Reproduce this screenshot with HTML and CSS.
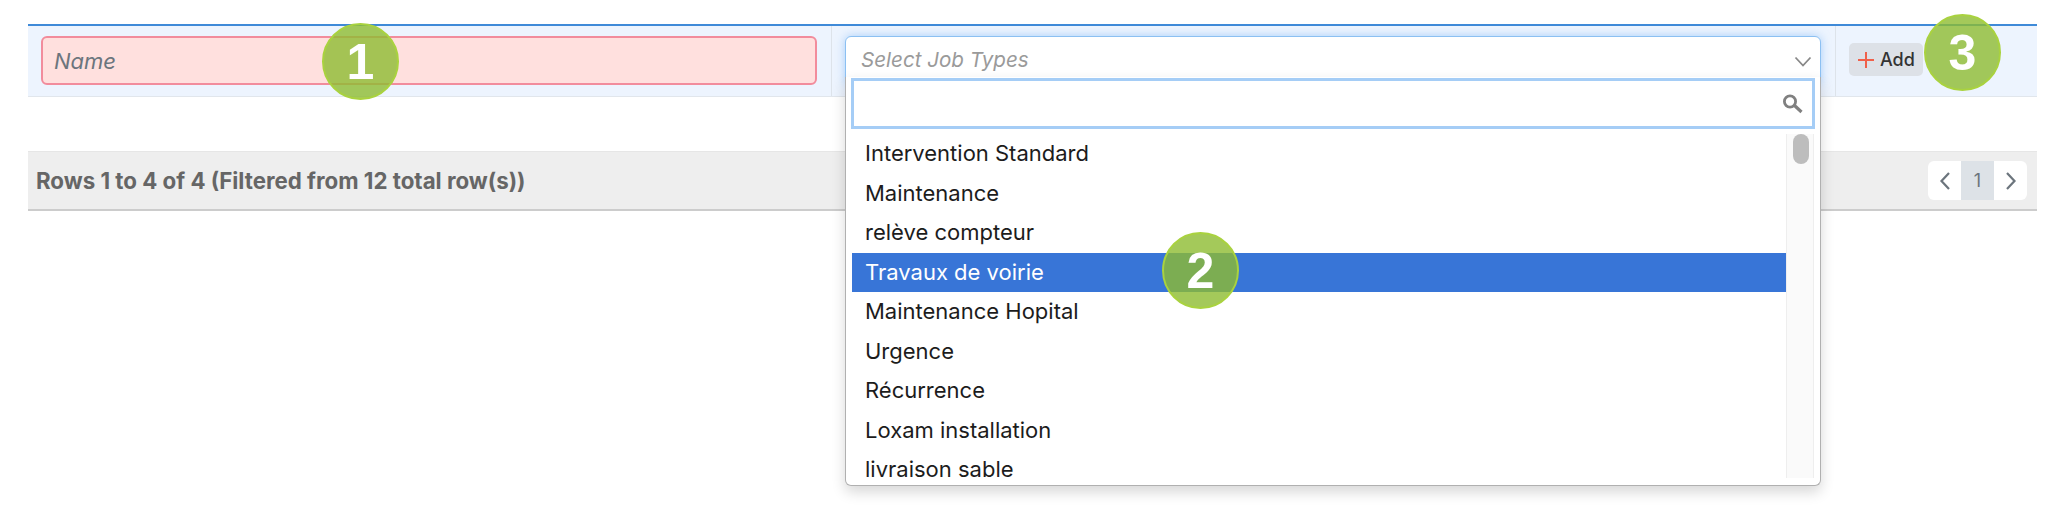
FILE: index.html
```html
<!DOCTYPE html>
<html lang="en">
<head>
    <meta charset="UTF-8">
    <meta name="viewport" content="width=device-width, initial-scale=1.0">
    <title>Job Types</title>
    <link rel="stylesheet" href="styles.css">
</head>
<body>

<div class="add-row">
    <div class="cell cell-name">
        <input class="name-input" type="text" placeholder="Name">
        <span class="badge badge-one">1</span>
    </div>
    <div class="cell cell-select">
        <div class="select">
            <span class="select-placeholder">Select Job Types</span>
            <svg class="select-arrow" width="18" height="12" viewBox="0 0 18 12"><path d="M1.500 1.500 9 9.500l7.500-8" fill="none" stroke="#888" stroke-width="1.800"/></svg>
            <div class="dropdown">
                <div class="search-box">
                    <svg width="22" height="20" viewBox="0 0 22 20"><circle cx="8" cy="7.500" r="5.600" fill="none" stroke="#808080" stroke-width="2.800"/><path d="M12.500 11.500l7 6.500" fill="none" stroke="#808080" stroke-width="3.200"/></svg>
                </div>
                <div class="results">
                    <ul class="options">
                        <li>Intervention Standard</li>
                        <li>Maintenance</li>
                        <li>relève compteur</li>
                        <li class="selected">Travaux de voirie</li>
                        <li>Maintenance Hopital</li>
                        <li>Urgence</li>
                        <li>Récurrence</li>
                        <li>Loxam installation</li>
                        <li>livraison sable</li>
                    </ul>
                    <div class="scroll-track"><div class="scroll-thumb"></div></div>
                </div>
            </div>
        </div>
        <span class="badge badge-two">2</span>
    </div>
    <div class="cell cell-action">
        <button class="add-btn" type="button">
            <svg width="16" height="16" viewBox="0 0 16 16"><path d="M8 0v16M0 8h16" stroke="#f0604a" stroke-width="2"/></svg>
            Add
        </button>
        <span class="badge badge-three">3</span>
    </div>
</div>

<div class="table-footer">
    <span class="rows-info">Rows 1 to 4 of 4 (Filtered from 12 total row(s))</span>
    <div class="pagination">
        <span class="page-arrow"><svg width="12" height="20" viewBox="0 0 12 20"><path d="M10 2 2.500 10l7.500 8" fill="none" stroke="#6c757d" stroke-width="2.200"/></svg></span>
        <span class="page-current">1</span>
        <span class="page-arrow"><svg width="12" height="20" viewBox="0 0 12 20"><path d="M2 2l7.500 8L2 18" fill="none" stroke="#6c757d" stroke-width="2.200"/></svg></span>
    </div>
</div>

</body>
</html>
```

FILE: styles.css
```css
* {
    margin: 0;
    padding: 0;
    box-sizing: border-box;
}

body {
    font-family: Inter, "Liberation Sans", sans-serif;
    background-color: #fff;
    color: #222;
    min-height: 528px;
    padding: 24px 31px 0 28px;
}

.add-row {
    display: flex;
    height: 73px;
    background-color: #edf4fe;
    border-top: 2px solid #3f8ad8;
    border-bottom: 1px solid #e1e6ec;
}

.cell {
    position: relative;
    padding: 10px 14px 10px 13px;
    border-right: 1px solid #dde3ea;
}

.cell-name {
    width: 804px;
}

.cell-select {
    width: 1004px;
}

.cell-action {
    flex: 1;
    border-right: none;
    padding: 17px 13px;
}

.name-input {
    display: block;
    width: 100%;
    height: 49px;
    padding: 0 11px;
    font-family: inherit;
    font-size: 22px;
    background-color: #ffe0de;
    border: 2px solid #f28c9c;
    border-radius: 6px;
    outline: none;
}

.name-input::placeholder {
    font-style: italic;
    color: #6c757d;
    opacity: 1;
}

.select {
    position: relative;
    height: 49px;
    padding: 0 15px;
    display: flex;
    align-items: flex-start;
    justify-content: space-between;
    background-color: #fff;
    border: 1px solid #8cc0f2;
    border-radius: 6px;
    box-shadow: 0 0 10px rgba(110, 175, 245, 0.55);
    font-size: 20.6px;
}

.select-placeholder {
    font-style: italic;
    color: #9a9a9a;
    line-height: 46px;
}

.select-arrow {
    margin: 19px -7px 0 0;
}

.dropdown {
    position: absolute;
    z-index: 2;
    top: 40px;
    left: -1px;
    right: -1px;
    height: 409px;
    padding-top: 1px;
    background-color: #fff;
    border: 1px solid #b0b0b0;
    border-top: none;
    border-radius: 0 0 6px 6px;
    box-shadow: 0 6px 14px rgba(0, 0, 0, 0.16);
}

.search-box {
    display: flex;
    align-items: center;
    justify-content: flex-end;
    height: 51px;
    margin: 0 5px;
    padding-right: 8px;
    background-color: #fff;
    border: 3px solid #a5cdf6;
}

.results {
    display: flex;
    height: 350px;
    margin: 5px 6px 0;
}

.options {
    flex: 1;
    overflow: hidden;
    list-style: none;
}

.options li {
    height: 39.5px;
    padding: 6px 0 0 13px;
    font-size: 22px;
    line-height: 26px;
    color: #1c1c1c;
}

.options li.selected {
    background-color: #3875d7;
    color: #fff;
}

.scroll-track {
    width: 28px;
    margin-bottom: 6px;
    background-color: #fafafa;
    border-left: 1px solid #eee;
    border-right: 1px solid #eee;
}

.scroll-thumb {
    width: 16px;
    height: 30px;
    margin-left: 6px;
    background-color: #bdbdbd;
    border-radius: 8px;
}

.add-btn {
    display: flex;
    align-items: center;
    gap: 6px;
    width: 74px;
    height: 33px;
    padding-left: 9px;
    font-family: inherit;
    font-size: 18px;
    font-weight: 500;
    color: #333;
    background-color: #dde1e7;
    border: none;
    border-radius: 5px;
}

.badge {
    position: absolute;
    z-index: 3;
    width: 77px;
    height: 77px;
    display: flex;
    align-items: center;
    justify-content: center;
    font-family: "Liberation Sans", sans-serif;
    font-size: 50px;
    font-weight: bold;
    color: #fff;
    background-color: rgba(141, 187, 49, 0.8);
    border: 2px solid #a9d23f;
    border-radius: 50%;
}

.badge-one {
    top: -3px;
    left: 294px;
}

.badge-two {
    top: 206px;
    left: 330px;
}

.badge-three {
    top: -12px;
    left: 88px;
}

.table-footer {
    display: flex;
    align-items: center;
    justify-content: space-between;
    height: 60px;
    margin-top: 54px;
    padding: 0 10px 0 8px;
    background-color: #eee;
    border-top: 1px solid #e6e6e6;
    border-bottom: 2px solid #ccc;
}

.rows-info {
    font-size: 22.3px;
    font-weight: 700;
    color: #666;
}

.pagination {
    display: flex;
    height: 39px;
    background-color: #fff;
    border-radius: 6px;
    overflow: hidden;
}

.page-arrow,
.page-current {
    display: flex;
    align-items: center;
    justify-content: center;
}

.page-arrow {
    width: 33px;
}

.page-current {
    width: 33px;
    font-size: 18px;
    color: #6c757d;
    background-color: #dde2e7;
}
```
